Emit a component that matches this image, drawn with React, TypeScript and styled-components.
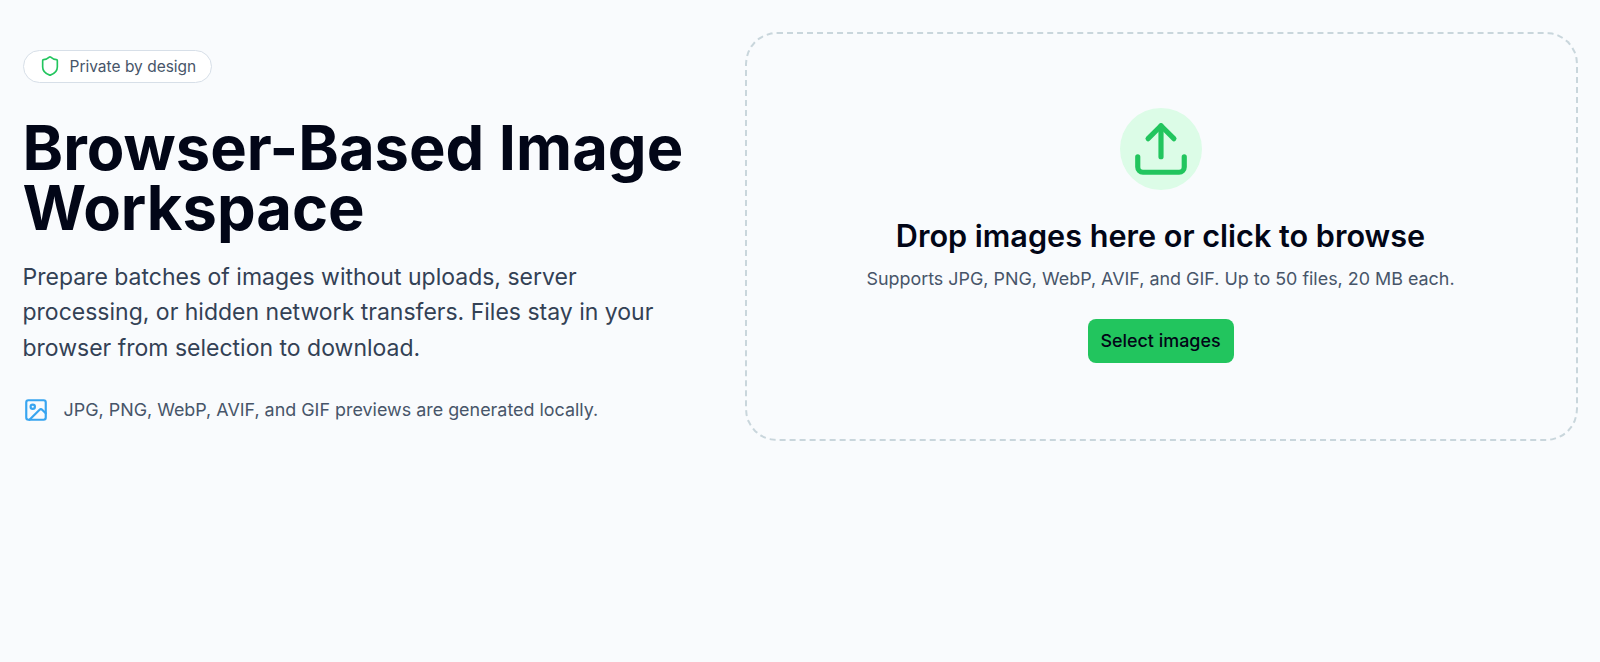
import React from "react";
import styled, { createGlobalStyle } from "styled-components";

const Global = createGlobalStyle`
  html, body { margin: 0; padding: 0; background: #f9fbfd; }
  body { font-family: Inter, "Noto Sans", sans-serif; }
`;

const Page = styled.main`
  display: grid;
  grid-template-columns: 690.5px 833px;
  column-gap: 32px;
  align-items: center;
  align-content: start;
  padding: 32px 22px 0 22.5px;
  min-height: 662px;
  box-sizing: border-box;
`;

const Intro = styled.section`
  display: flex;
  flex-direction: column;
  align-items: flex-start;
`;

const Badge = styled.div`
  display: inline-flex;
  align-items: center;
  gap: 9px;
  height: 33px;
  box-sizing: border-box;
  padding: 0 15px;
  border: 1px solid #d7dfe8;
  border-radius: 999px;
  background: #ffffff;
  color: #475569;
  font-size: 15.5px;
`;

const Title = styled.h1`
  margin: 35px 0 0;
  font-size: 61.44px;
  line-height: 60px;
  font-weight: 700;
  color: #020617;
`;

const Lead = styled.p`
  margin: 22.5px 0 0;
  font-size: 23px;
  line-height: 35.2px;
  color: #334155;
`;

const Note = styled.div`
  display: flex;
  align-items: center;
  gap: 15px;
  margin-top: 30.5px;
  font-size: 17.92px;
  line-height: 27px;
  color: #475569;
`;

const Drop = styled.section`
  display: flex;
  flex-direction: column;
  align-items: center;
  height: 409px;
  box-sizing: border-box;
  padding: 74px 2px 0 0;
  border: 2px dashed #c9d6dc;
  border-radius: 32px;
`;

const IconCircle = styled.div`
  display: flex;
  align-items: center;
  justify-content: center;
  width: 82px;
  height: 82px;
  border-radius: 50%;
  background: #dcfce7;
`;

const DropTitle = styled.h2`
  margin: 27px 0 0;
  font-size: 30.6px;
  line-height: 38px;
  font-weight: 600;
  color: #020617;
`;

const DropText = styled.p`
  margin: 10px 0 0;
  font-size: 17.92px;
  line-height: 27px;
  color: #475569;
`;

const SelectButton = styled.button`
  margin-top: 27px;
  width: 146px;
  height: 44px;
  border: 0;
  border-radius: 8px;
  background: #22c55e;
  color: #020617;
  font-family: inherit;
  font-size: 17.92px;
  font-weight: 500;
  padding: 0 0 1px;
`;

export default function App() {
  return (
    <>
      <Global />
      <Page>
        <Intro>
          <Badge>
            <svg width="22" height="22" viewBox="0 0 24 24" fill="none" stroke="#22c55e" strokeWidth="1.8" strokeLinecap="round" strokeLinejoin="round">
              <path d="M20 13c0 5-3.5 7.5-7.66 8.95a1 1 0 0 1-.67-.01C7.5 20.5 4 18 4 13V6a1 1 0 0 1 1-1c2 0 4.5-1.2 6.24-2.72a1.17 1.17 0 0 1 1.52 0C14.51 3.81 17 5 19 5a1 1 0 0 1 1 1z" />
            </svg>
            Private by design
          </Badge>
          <Title>
            Browser-Based Image
            <br />
            Workspace
          </Title>
          <Lead>
            Prepare batches of images without uploads, server
            <br />
            processing, or hidden network transfers. Files stay in your
            <br />
            browser from selection to download.
          </Lead>
          <Note>
            <svg width="26" height="26" viewBox="0 0 24 24" fill="none" stroke="#38a5f0" strokeWidth="2" strokeLinecap="round" strokeLinejoin="round">
              <rect x="3" y="3" width="18" height="18" rx="2" ry="2" />
              <circle cx="9" cy="9" r="2" />
              <path d="m21 15-3.086-3.086a2 2 0 0 0-2.828 0L6 21" />
            </svg>
            JPG, PNG, WebP, AVIF, and GIF previews are generated locally.
          </Note>
        </Intro>
        <Drop>
          <IconCircle>
            <svg width="62" height="62" viewBox="0 0 24 24" fill="none" stroke="#22c55e" strokeWidth="2" strokeLinecap="round" strokeLinejoin="round">
              <path d="M12 3v12" />
              <path d="m17 8-5-5-5 5" />
              <path d="M21 15v4a2 2 0 0 1-2 2H5a2 2 0 0 1-2-2v-4" />
            </svg>
          </IconCircle>
          <DropTitle>Drop images here or click to browse</DropTitle>
          <DropText>Supports JPG, PNG, WebP, AVIF, and GIF. Up to 50 files, 20 MB each.</DropText>
          <SelectButton>Select images</SelectButton>
        </Drop>
      </Page>
    </>
  );
}
